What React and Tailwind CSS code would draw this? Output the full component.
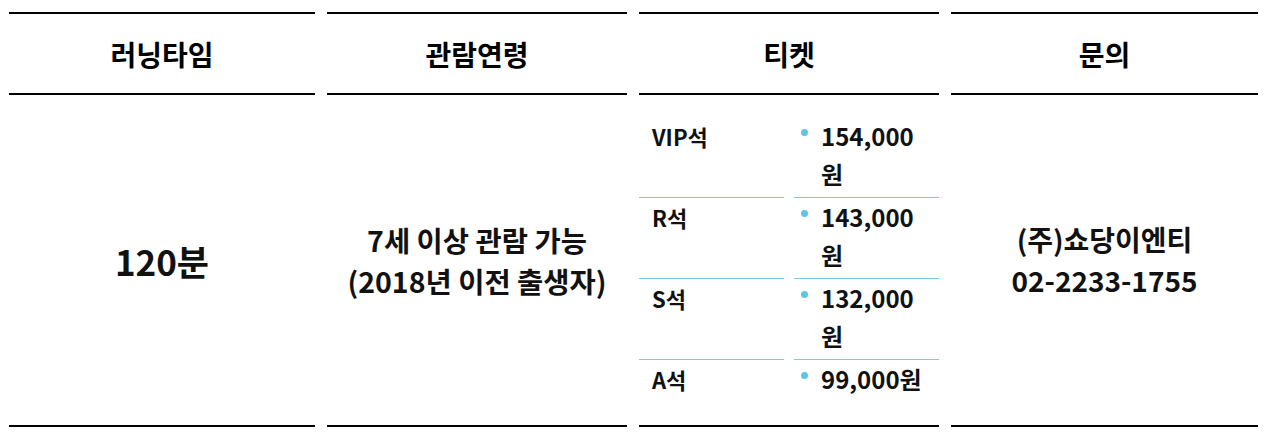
import React from 'react'

const font = { fontFamily: '"Noto Sans CJK KR", "Noto Sans", sans-serif' }

const tickets = [
  { grade: 'VIP석', price: '154,000원' },
  { grade: 'R석', price: '143,000원' },
  { grade: 'S석', price: '132,000원' },
  { grade: 'A석', price: '99,000원' },
]

function Header({ children }) {
  return (
    <div className="h-[83px] border-y-2 border-black flex items-center justify-center text-[28px] font-bold text-black">
      {children}
    </div>
  )
}

export default function App() {
  return (
    <div className="bg-white w-[1269px] h-[433px] pt-3 pl-[9px]" style={font}>
      <div className="grid grid-cols-[306px_300px_300px_307px] gap-x-3 text-[#111]">
        {/* 러닝타임 */}
        <div className="flex flex-col">
          <Header>러닝타임</Header>
          <div className="h-[332px] border-b-2 border-black flex items-center justify-center">
            <span className="text-[35px] font-bold leading-none">120분</span>
          </div>
        </div>

        {/* 관람연령 */}
        <div className="flex flex-col">
          <Header>관람연령</Header>
          <div className="h-[332px] border-b-2 border-black flex flex-col items-center justify-center text-[28.5px] font-bold leading-[41px] text-center">
            <p>7세 이상 관람 가능</p>
            <p>(2018년 이전 출생자)</p>
          </div>
        </div>

        {/* 티켓 */}
        <div className="flex flex-col">
          <Header>티켓</Header>
          <div className="h-[332px] border-b-2 border-black py-[22px]">
            {tickets.map((t, i) => (
              <div key={t.grade} className="grid grid-cols-2 gap-x-[10px]">
                <div className={`pl-[13px] pb-1 text-[22px] font-bold leading-[38px] ${i > 0 ? 'border-t border-[#79cbe2]' : ''}`}>
                  {t.grade}
                </div>
                <div className={`flex pb-1 ${i > 0 ? 'border-t border-[#79cbe2]' : ''}`}>
                  <span className="w-[7px] h-[7px] rounded-full bg-[#5cc6e4] ml-[7px] mt-[12px] shrink-0" />
                  <span className="ml-[13px] w-[106px] text-[24px] font-bold leading-[38px]">{t.price}</span>
                </div>
              </div>
            ))}
          </div>
        </div>

        {/* 문의 */}
        <div className="flex flex-col">
          <Header>문의</Header>
          <div className="h-[332px] border-b-2 border-black flex flex-col items-center justify-center text-[28px] font-bold leading-[41px] text-center">
            <p>(주)쇼당이엔티</p>
            <p>02-2233-1755</p>
          </div>
        </div>
      </div>
    </div>
  )
}
